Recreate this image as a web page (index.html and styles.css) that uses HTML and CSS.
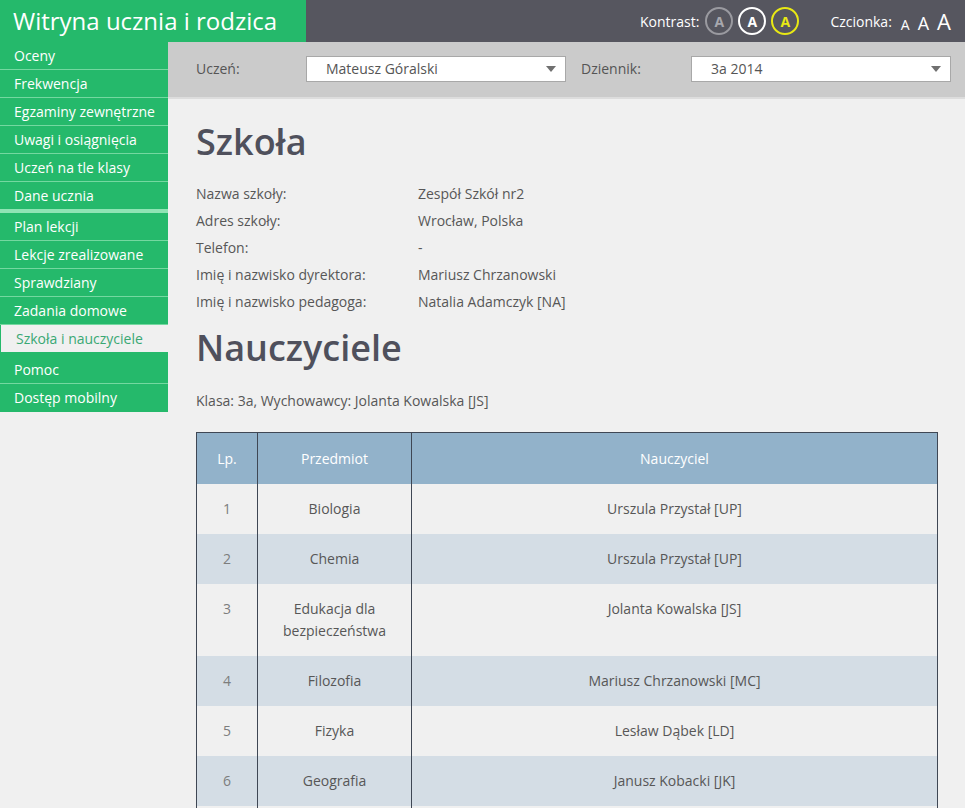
FILE: index.html
```html
<!DOCTYPE html>
<html lang="pl">
<head>
<meta charset="utf-8">
<title>Witryna ucznia i rodzica</title>
<link rel="stylesheet" href="styles.css">
</head>
<body>
<header class="topbar">
  <div class="brand">Witryna ucznia i rodzica</div>
  <div class="tools">
    <span class="tool-label">Kontrast:</span>
    <span class="contrast c-gray">A</span>
    <span class="contrast c-white">A</span>
    <span class="contrast c-yellow">A</span>
    <span class="tool-label font-label">Czcionka:</span>
    <span class="fonts">
      <span class="fs fs-s">A</span>
      <span class="fs fs-m">A</span>
      <span class="fs fs-l">A</span>
    </span>
  </div>
</header>
<div class="layout">
  <nav class="sidebar">
    <ul class="menu">
      <li class="item">Oceny</li>
      <li class="item">Frekwencja</li>
      <li class="item">Egzaminy zewnętrzne</li>
      <li class="item">Uwagi i osiągnięcia</li>
      <li class="item">Uczeń na tle klasy</li>
      <li class="item group-end">Dane ucznia</li>
      <li class="item">Plan lekcji</li>
      <li class="item">Lekcje zrealizowane</li>
      <li class="item">Sprawdziany</li>
      <li class="item">Zadania domowe</li>
      <li class="item active">Szkoła i nauczyciele</li>
      <li class="item">Pomoc</li>
      <li class="item last">Dostęp mobilny</li>
    </ul>
  </nav>
  <main class="main">
    <div class="filters">
      <span class="filter-label">Uczeń:</span>
      <div class="select"><span>Mateusz Góralski</span><span class="arrow"></span></div>
      <span class="filter-label second">Dziennik:</span>
      <div class="select"><span>3a 2014</span><span class="arrow"></span></div>
    </div>
    <div class="content">
      <h1 class="title">Szkoła</h1>
      <dl class="info">
        <dt>Nazwa szkoły:</dt><dd>Zespół Szkół nr2</dd>
        <dt>Adres szkoły:</dt><dd>Wrocław, Polska</dd>
        <dt>Telefon:</dt><dd>-</dd>
        <dt>Imię i nazwisko dyrektora:</dt><dd>Mariusz Chrzanowski</dd>
        <dt>Imię i nazwisko pedagoga:</dt><dd>Natalia Adamczyk [NA]</dd>
      </dl>
      <h1 class="title title-2">Nauczyciele</h1>
      <p class="klasa">Klasa: 3a, Wychowawcy: Jolanta Kowalska [JS]</p>
      <table class="teachers">
        <thead>
          <tr><th class="col-lp">Lp.</th><th class="col-subj">Przedmiot</th><th>Nauczyciel</th></tr>
        </thead>
        <tbody>
          <tr><td class="lp">1</td><td>Biologia</td><td>Urszula Przystał [UP]</td></tr>
          <tr><td class="lp">2</td><td>Chemia</td><td>Urszula Przystał [UP]</td></tr>
          <tr><td class="lp">3</td><td>Edukacja dla bezpieczeństwa</td><td>Jolanta Kowalska [JS]</td></tr>
          <tr><td class="lp">4</td><td>Filozofia</td><td>Mariusz Chrzanowski [MC]</td></tr>
          <tr><td class="lp">5</td><td>Fizyka</td><td>Lesław Dąbek [LD]</td></tr>
          <tr><td class="lp">6</td><td>Geografia</td><td>Janusz Kobacki [JK]</td></tr>
          <tr><td class="lp">7</td><td>Historia</td><td>Jolanta Kowalska [JS]</td></tr>
        </tbody>
      </table>
    </div>
  </main>
</div>
</body>
</html>
```
FILE: styles.css
```css
* { box-sizing: border-box; }
html, body { margin: 0; padding: 0; }
body {
  font-family: "Open Sans", "Noto Sans", sans-serif;
  font-size: 14px;
  color: #575757;
  background: #f0f0f0;
  overflow: hidden;
}

.topbar {
  display: flex;
  height: 42px;
  background: #56565f;
}
.brand {
  width: 306px;
  background: #25b96b;
  color: #fff;
  font-size: 24px;
  line-height: 42px;
  padding-left: 13px;
  white-space: nowrap;
}
.tools {
  flex: 1;
  display: flex;
  align-items: center;
  justify-content: flex-end;
  padding-right: 14px;
  color: #fff;
}
.tool-label { font-size: 14px; margin-right: 6px; }
.font-label { margin-left: 31px; margin-right: 9px; }
.contrast {
  width: 28px;
  height: 28px;
  border-radius: 50%;
  border: 2px solid #fff;
  display: flex;
  align-items: center;
  justify-content: center;
  font-weight: 700;
  font-size: 14px;
  margin-right: 5px;
}
.contrast.c-yellow { margin-right: 0; }
.c-gray { border-color: #9a9aa0; color: #a8a8ae; }
.c-white { border-color: #fff; color: #fff; }
.c-yellow { border-color: #e8e814; color: #e8e814; }
.fonts { display: flex; align-items: baseline; gap: 8px; }
.fs-s { font-size: 14px; }
.fs-m { font-size: 18px; }
.fs-l { font-size: 22px; }

.layout { display: flex; }
.sidebar { width: 168px; flex-shrink: 0; }
.menu { list-style: none; margin: 0; padding: 0; }
.item {
  height: 28px;
  line-height: 27px;
  padding-left: 14px;
  background: #25b96b;
  color: #fff;
  border-bottom: 1px solid #74d8a0;
  white-space: nowrap;
}
.item.group-end { border-bottom: 4px solid #8fe4b4; height: 31px; }
.item.active {
  background: #f0f0f0;
  color: #3aa874;
  padding-left: 15px;
  line-height: 28px;
  border-left: 1px solid #25b96b;
  border-bottom: 3px solid #25b96b;
  box-shadow: inset 0 -1px 0 #25b96b;
  height: 31px;
}
.item.last { border-bottom: none; }

.main { flex: 1; min-width: 0; }
.filters {
  display: flex;
  align-items: center;
  height: 57px;
  padding: 0 14px 2px 28px;
  background: #cbcbcb;
  border-bottom: 2px solid #dddddd;
}
.filter-label { width: 110px; font-size: 14px; color: #555; }
.filter-label.second { margin-left: 15px; }
.select {
  flex: 1;
  height: 26px;
  background: #fff;
  border: 1px solid #a8a8a8;
  display: flex;
  align-items: center;
  justify-content: space-between;
  padding: 0 9px 0 19px;
  color: #555;
}
.arrow {
  width: 0;
  height: 0;
  border-left: 5px solid transparent;
  border-right: 5px solid transparent;
  border-top: 6px solid #707070;
}

.content { padding: 21px 27px 0 28px; }
.title {
  margin: 0;
  font-size: 36px;
  font-weight: 600;
  line-height: 44px;
  color: #4f505c;
}
.info {
  display: grid;
  grid-template-columns: 222px 1fr;
  margin: 16px 0 0;
  line-height: 27px;
}
.info dt, .info dd { margin: 0; }
.title-2 { margin-top: 11px; }
.klasa { margin: 21px 0 0; line-height: 20px; }

.teachers {
  width: 100%;
  margin-top: 21px;
  border-collapse: collapse;
  border: 1px solid #3f4754;
  border-bottom: none;
}
.teachers th {
  height: 51px;
  background: #92b2ca;
  color: #fff;
  font-weight: 400;
  text-align: center;
  border-left: 1px solid #3f4754;
  padding: 0 10px;
}
.teachers td {
  text-align: center;
  vertical-align: top;
  padding: 14px 10px;
  line-height: 22px;
  border-left: 1px solid #3f4754;
}
.teachers tbody tr:nth-child(even) td { background: #d4dde5; }
.col-lp { width: 61px; }
.col-subj { width: 154px; }
.teachers td.lp { color: #7d7d7d; }
```
